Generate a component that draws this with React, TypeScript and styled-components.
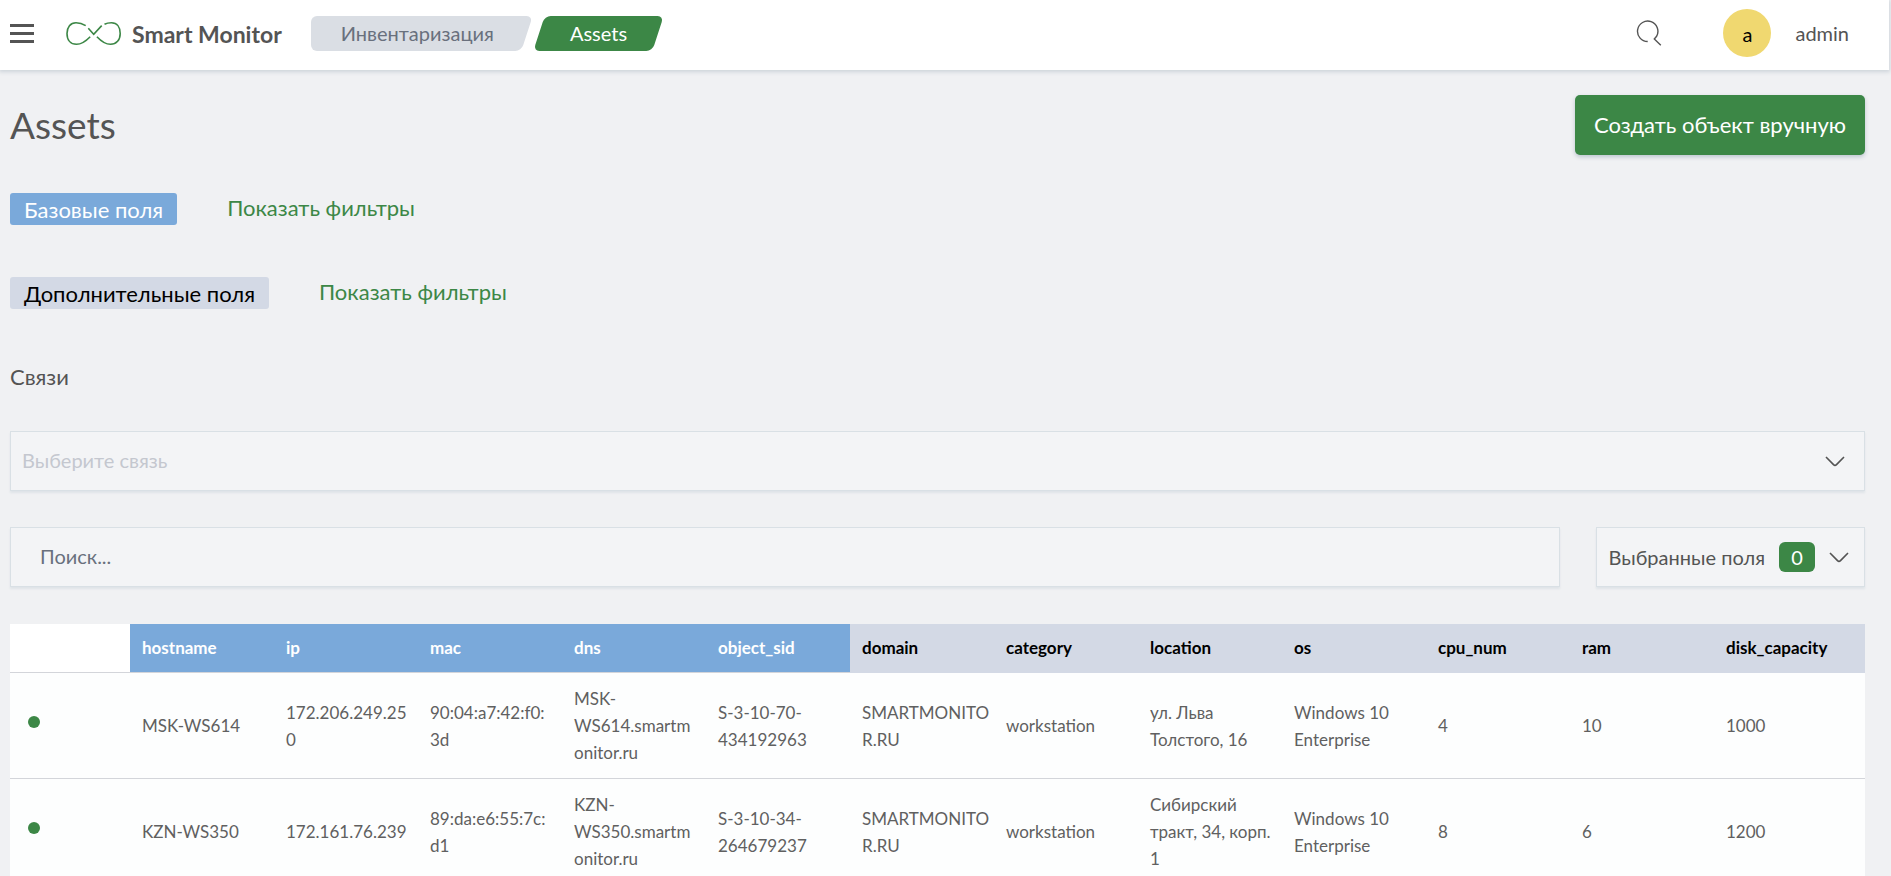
import React from 'react';
import styled, { createGlobalStyle, css } from 'styled-components';

const colors = {
  page: '#f0f1f3',
  text: '#545454',
  cellText: '#606060',
  green: '#3c8746',
  blue: '#7aa9da',
  lilac: '#d3d9e5',
  fieldBg: '#f3f4f6',
  fieldBorder: '#d9e0e5',
  line: '#d3d5da',
};

const GlobalStyle = createGlobalStyle`
  *, *::before, *::after { box-sizing: border-box; }
  html { height: 100%; overflow: hidden; }
  body {
    margin: 0;
    height: 100%;
    overflow: hidden;
    background: ${colors.page};
    color: ${colors.text};
    font-family: Lato, "Noto Sans", sans-serif;
    font-size: 22px;
    line-height: 32px;
  }
  button, input, select { font: inherit; color: inherit; margin: 0; }
`;

const Header = styled.header`
  display: flex;
  align-items: center;
  height: 70px;
  margin-right: 2px;
  padding: 0 39px 3px 10px;
  background: #fff;
  box-shadow: 0 1px 4px 1px #cdd4da;
`;

const IconButton = styled.button`
  display: flex;
  padding: 0;
  border: 0;
  background: none;
  cursor: pointer;
`;

const Brand = styled.a`
  display: flex;
  align-items: center;
  gap: 10px;
  margin-left: 32px;
  color: ${colors.text};
  font-size: 23px;
  font-weight: 700;
  text-decoration: none;
`;

const Crumbs = styled.nav`
  display: flex;
  margin-left: 29px;
  font-size: 20px;
  line-height: 35px;
`;

const Crumb = styled.a<{ $active?: boolean }>`
  position: relative;
  z-index: 0;
  padding: 0 31px;
  color: ${(p) => (p.$active ? '#fff' : '#69707d')};
  text-decoration: none;

  &::after {
    content: '';
    position: absolute;
    z-index: -1;
    inset: 0;
    border-radius: 6px;
    background: ${(p) => (p.$active ? colors.green : '#dadee4')};
    transform: skewX(-18deg);
  }

  ${(p) =>
    !p.$active &&
    css`
      margin-right: 12px;
      padding: 0 33px 0 30px;

      &::before {
        content: '';
        position: absolute;
        z-index: -1;
        inset: 0 20px 0 0;
        border-radius: 6px;
        background: #dadee4;
      }
      &::after { left: 40px; }
    `}
`;

const UserArea = styled.div`
  display: flex;
  align-items: center;
  gap: 24px;
  margin-left: auto;
  padding: 0 1px 2px 0;
  font-size: 20px;
`;

const Avatar = styled.span`
  width: 48px;
  height: 48px;
  margin-left: 37px;
  border-radius: 50%;
  background: #f0d870;
  color: #000;
  line-height: 50px;
  text-align: center;
`;

const Content = styled.main`
  padding: 25px 26px 0 10px;
`;

const TitleRow = styled.div`
  display: flex;
  align-items: center;
  justify-content: space-between;
  margin-bottom: 38px;
`;

const Title = styled.h1`
  margin: 0;
  font-size: 37px;
  font-weight: 400;
  line-height: 60px;
`;

const PrimaryButton = styled.button`
  height: 60px;
  padding: 0 19px;
  border: 0;
  border-radius: 5px;
  background: ${colors.green};
  box-shadow: 0 2px 4px #bcc6cf;
  color: #fff;
  cursor: pointer;
`;

const FilterRow = styled.div`
  display: flex;
  align-items: center;
  gap: 50px;
  height: 32px;
  margin-bottom: 52px;
`;

const Badge = styled.span<{ $extra?: boolean }>`
  height: 32px;
  padding: 1px 14px 0;
  border-radius: 3px;
  background: ${(p) => (p.$extra ? colors.lilac : colors.blue)};
  color: ${(p) => (p.$extra ? '#000' : '#fff')};
`;

const LinkButton = styled.button`
  padding: 0 0 2px;
  border: 0;
  background: none;
  color: ${colors.green};
  line-height: 30px;
  cursor: pointer;
`;

const Label = styled.label`
  display: block;
  margin-bottom: 38px;
`;

const field = css`
  height: 60px;
  border: 1px solid ${colors.fieldBorder};
  border-radius: 0;
  background: ${colors.fieldBg};
  box-shadow: 0 2px 2px #dfe4e8;
  font-size: 20px;
  outline: none;
`;

const SelectBox = styled.div`
  display: grid;
  align-items: center;
  margin-bottom: 36px;

  > * { grid-area: 1 / 1; }
  > svg { justify-self: end; margin-right: 20px; pointer-events: none; }
`;

const Select = styled.select`
  ${field}
  width: 100%;
  padding: 0 11px 2px;
  appearance: none;
  color: #c4c7cf;
`;

const SearchRow = styled.div`
  display: flex;
  gap: 36px;
  margin-bottom: 37px;
`;

const SearchInput = styled.input`
  ${field}
  flex: 1;
  min-width: 0;
  padding: 0 29px 2px;

  &::placeholder { color: #69707d; opacity: 1; }
`;

const FieldsButton = styled.button`
  ${field}
  display: flex;
  align-items: center;
  gap: 14px;
  padding: 0 15px 0 12px;
  cursor: pointer;
`;

const Count = styled.span`
  width: 36px;
  border-radius: 6px;
  background: ${colors.green};
  color: #fff;
  line-height: 30px;
  text-align: center;
`;

const Table = styled.table`
  width: 100%;
  border-spacing: 0;
  table-layout: fixed;
  background: #fdfefe;
  font-size: 17px;
  line-height: 27px;
`;

const StatusCol = styled.col`
  width: 120px;
`;

const FieldCol = styled.col`
  width: 144px;
`;

const HeadCell = styled.th<{ $kind?: 'base' | 'extra' }>`
  height: 49px;
  padding: 0 0 1px 12px;
  border-bottom: 1px solid ${(p) => (p.$kind === 'extra' ? colors.lilac : colors.line)};
  background: ${(p) =>
    p.$kind === 'base' ? colors.blue : p.$kind === 'extra' ? colors.lilac : '#fff'};
  color: ${(p) => (p.$kind === 'base' ? '#fff' : '#000')};
  text-align: left;
`;

const Cell = styled.td`
  height: 106px;
  padding: 12px 0 12px 12px;
  border-bottom: 1px solid ${colors.line};
  color: ${colors.cellText};
  white-space: pre-line;
`;

const StatusCell = styled(Cell)`
  padding: 0 0 8px 18px;
`;

const Dot = styled.span`
  display: block;
  width: 12px;
  height: 12px;
  border-radius: 50%;
  background: ${colors.green};
`;

const MenuIcon = () => (
  <svg width="24" height="19" viewBox="0 0 24 19" fill={colors.text} aria-hidden="true">
    <path d="M0 0h24v3H0zM0 8h24v3H0zM0 16h24v3H0z" />
  </svg>
);

const LogoIcon = () => (
  <svg width="56" height="25" viewBox="0 0 56 25" fill="none" stroke={colors.green} strokeWidth="1.6" aria-hidden="true">
    <path d="M19.7 4.7C16 2.3 13 1.7 10 1.7C4.5 1.7 1 6 1 12.5C1 19 4.5 23.3 10.5 23.3C16 23.3 20.5 19.5 24.2 15.7" />
    <path d="M22.3 7.3L27.7 13.3L35.7 4.6" />
    <path d="M30.9 15.7C35 20 39 23.3 44.5 23.3C50.5 23.3 54.2 19 54.2 12.5C54.2 6 51 1.7 45.5 1.7C43 1.7 40.8 2 38.5 3.2" />
  </svg>
);

const SearchIcon = () => (
  <svg width="26" height="26" viewBox="0 0 26 26" fill="none" stroke={colors.text} strokeWidth="1.4" aria-hidden="true">
    <path d="M11.7 21.5A10.2 10.2 0 1 1 20.6 16.3L18.3 19L24.8 25.2" />
  </svg>
);

const Chevron = () => (
  <svg width="20" height="11" viewBox="0 0 20 11" fill="none" stroke={colors.text} strokeWidth="1.6" aria-hidden="true">
    <path d="M1 1L8.5 8.6Q10 10 11.5 8.6L19 1" />
  </svg>
);

const baseFields = ['hostname', 'ip', 'mac', 'dns', 'object_sid'];
const extraFields = ['domain', 'category', 'location', 'os', 'cpu_num', 'ram', 'disk_capacity'];
const fixedFields = [...baseFields, ...extraFields].slice(0, -1);

const rows = [
  ['MSK-WS614', '172.206.249.25\n0', '90:04:a7:42:f0:\n3d', 'MSK-\nWS614.smartm\nonitor.ru', 'S-3-10-70-\n434192963', 'SMARTMONITO\nR.RU', 'workstation', 'ул. Льва\nТолстого, 16', 'Windows 10\nEnterprise', '4', '10', '1000'],
  ['KZN-WS350', '172.161.76.239', '89:da:e6:55:7c:\nd1', 'KZN-\nWS350.smartm\nonitor.ru', 'S-3-10-34-\n264679237', 'SMARTMONITO\nR.RU', 'workstation', 'Сибирский\nтракт, 34, корп.\n1', 'Windows 10\nEnterprise', '8', '6', '1200'],
];

export default function App() {
  return (
    <>
      <GlobalStyle />
      <Header>
        <IconButton aria-label="Меню"><MenuIcon /></IconButton>
        <Brand href="#"><LogoIcon />Smart Monitor</Brand>
        <Crumbs>
          <Crumb href="#">Инвентаризация</Crumb>
          <Crumb href="#" $active>Assets</Crumb>
        </Crumbs>
        <UserArea>
          <IconButton aria-label="Поиск"><SearchIcon /></IconButton>
          <Avatar>a</Avatar>
          <span>admin</span>
        </UserArea>
      </Header>
      <Content>
        <TitleRow>
          <Title>Assets</Title>
          <PrimaryButton>Создать объект вручную</PrimaryButton>
        </TitleRow>
        <FilterRow>
          <Badge>Базовые поля</Badge>
          <LinkButton>Показать фильтры</LinkButton>
        </FilterRow>
        <FilterRow>
          <Badge $extra>Дополнительные поля</Badge>
          <LinkButton>Показать фильтры</LinkButton>
        </FilterRow>
        <Label htmlFor="relation">Связи</Label>
        <SelectBox>
          <Select id="relation" defaultValue="">
            <option value="">Выберите связь</option>
          </Select>
          <Chevron />
        </SelectBox>
        <SearchRow>
          <SearchInput type="text" placeholder="Поиск..." aria-label="Поиск" />
          <FieldsButton>
            Выбранные поля
            <Count>0</Count>
            <Chevron />
          </FieldsButton>
        </SearchRow>
        <Table>
          <colgroup>
            <StatusCol />
            {fixedFields.map((name) => <FieldCol key={name} />)}
            <col />
          </colgroup>
          <thead>
            <tr>
              <HeadCell />
              {baseFields.map((name) => <HeadCell key={name} $kind="base">{name}</HeadCell>)}
              {extraFields.map((name) => <HeadCell key={name} $kind="extra">{name}</HeadCell>)}
            </tr>
          </thead>
          <tbody>
            {rows.map((row) => (
              <tr key={row[0]}>
                <StatusCell><Dot /></StatusCell>
                {row.map((value, i) => <Cell key={i}>{value}</Cell>)}
              </tr>
            ))}
          </tbody>
        </Table>
      </Content>
    </>
  );
}
